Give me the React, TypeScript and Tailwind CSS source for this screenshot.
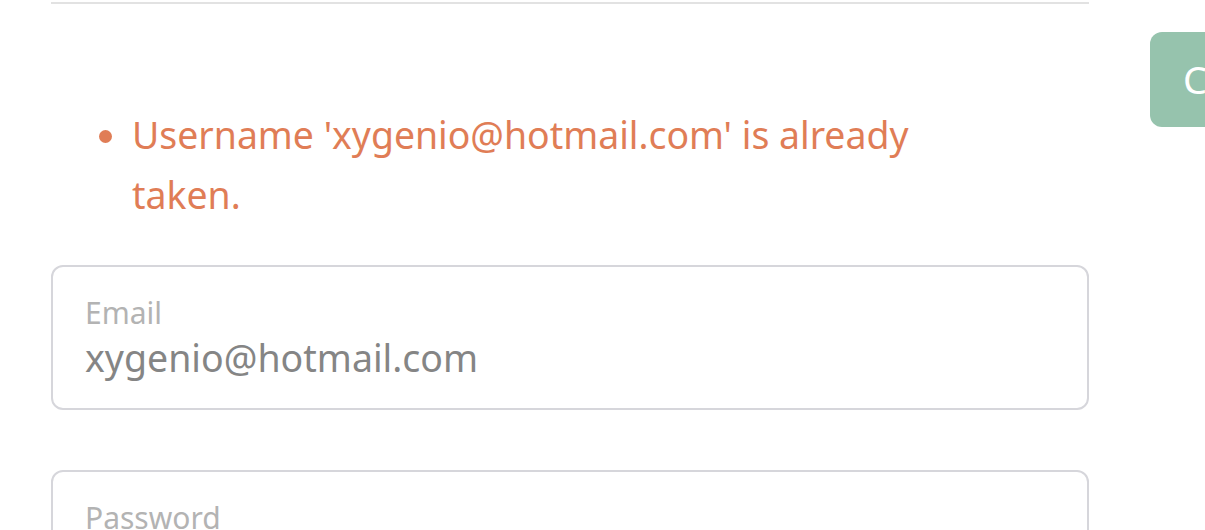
export default function App() {
  return (
    <div
      className="flex h-[530px] w-[1205px] overflow-hidden bg-white"
      style={{ fontFamily: '"Noto Sans", "Open Sans", sans-serif' }}
    >
      <div className="ml-[51px] w-[1038px] shrink-0">
        <div className="mt-[2px] border-t-2 border-[#e2e2e2]" />

        <ul className="mt-[101px] w-[900px] list-disc pl-[81px] text-[37.4px] leading-[60px] text-[#e07d56] marker:text-[#e07d56]">
          <li>Username 'xygenio@hotmail.com' is already taken.</li>
        </ul>

        <div className="mt-[40px] flex h-[145px] flex-col rounded-[12px] border-2 border-[#d6d6db] pl-[32px] pt-[28px]">
          <label className="text-[30px] leading-[36px] text-[#b3b3b3]">Email</label>
          <div className="mt-[3px] text-[37.5px] leading-[48px] text-[#858585]">xygenio@hotmail.com</div>
        </div>

        <div className="mt-[60px] flex h-[145px] flex-col rounded-[12px] border-2 border-[#d6d6db] pl-[32px] pt-[28px]">
          <label className="text-[30px] leading-[36px] text-[#b3b3b3]">Password</label>
        </div>
      </div>

      <div className="ml-[61px] shrink-0 pt-[32px]">
        <button className="flex h-[95px] items-center rounded-[12px] bg-[#96c3ad] pl-[33px] pr-[40px] text-[38px] text-white">
          Create
        </button>
      </div>
    </div>
  );
}
